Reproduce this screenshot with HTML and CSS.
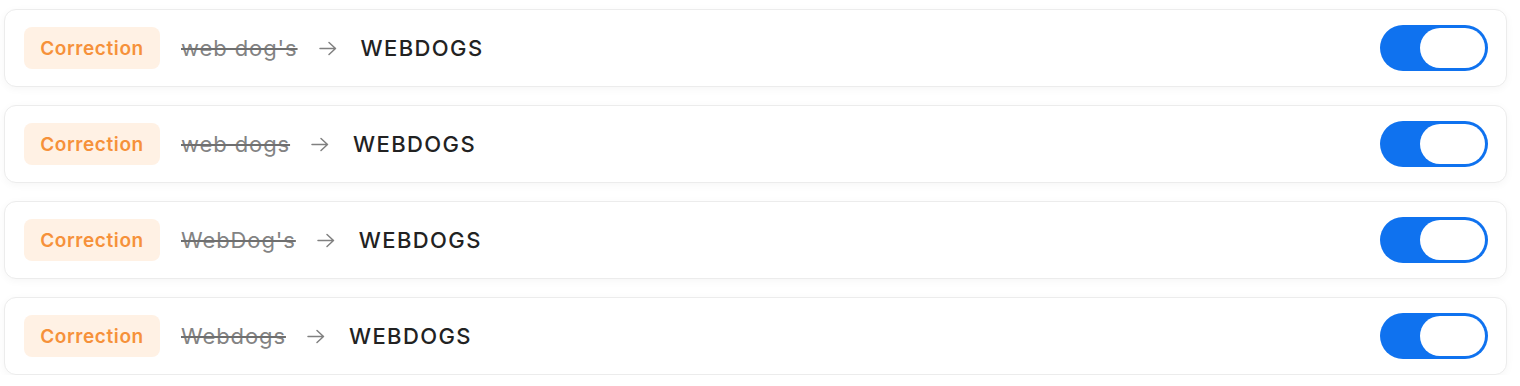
FILE: index.html
```html
<!DOCTYPE html>
<html lang="en">
<head>
    <meta charset="utf-8">
    <title>Corrections</title>
    <link rel="stylesheet" href="styles.css">
</head>
<body>
    <div class="rule-list">
        <div class="rule">
            <span class="badge">Correction</span>
            <span class="from">web dog's</span>
            <svg class="arrow" width="18" height="15" viewBox="0 0 18 15"><path d="M1 7.5h15.5M10 1.5l6.5 6-6.5 6"/></svg>
            <span class="to">WEBDOGS</span>
            <label class="toggle"><input type="checkbox" checked><span class="knob"></span></label>
        </div>
        <div class="rule">
            <span class="badge">Correction</span>
            <span class="from">web dogs</span>
            <svg class="arrow" width="18" height="15" viewBox="0 0 18 15"><path d="M1 7.5h15.5M10 1.5l6.5 6-6.5 6"/></svg>
            <span class="to">WEBDOGS</span>
            <label class="toggle"><input type="checkbox" checked><span class="knob"></span></label>
        </div>
        <div class="rule">
            <span class="badge">Correction</span>
            <span class="from">WebDog's</span>
            <svg class="arrow" width="18" height="15" viewBox="0 0 18 15"><path d="M1 7.5h15.5M10 1.5l6.5 6-6.5 6"/></svg>
            <span class="to">WEBDOGS</span>
            <label class="toggle"><input type="checkbox" checked><span class="knob"></span></label>
        </div>
        <div class="rule">
            <span class="badge">Correction</span>
            <span class="from">Webdogs</span>
            <svg class="arrow" width="18" height="15" viewBox="0 0 18 15"><path d="M1 7.5h15.5M10 1.5l6.5 6-6.5 6"/></svg>
            <span class="to">WEBDOGS</span>
            <label class="toggle"><input type="checkbox" checked><span class="knob"></span></label>
        </div>
    </div>
</body>
</html>
```
FILE: styles.css
```css
/* General */
body {
    margin: 0;
    font-family: Inter, "Noto Sans", sans-serif;
    background-color: #fff;
}

/* List of rules */
.rule-list {
    display: flex;
    flex-direction: column;
    gap: 18px;
    padding: 9px 13px 0 4px;
}

.rule {
    display: flex;
    align-items: center;
    height: 78px;
    box-sizing: border-box;
    padding: 0 18px 0 19px;
    border: 1px solid #ececec;
    border-radius: 12px;
    background-color: #fff;
    box-shadow: 0 2px 8px rgba(0, 0, 0, 0.04);
}

/* Badge */
.badge {
    display: inline-flex;
    align-items: center;
    justify-content: center;
    width: 136px;
    height: 42px;
    border-radius: 8px;
    background-color: #fff1e4;
    color: #f6913a;
    font-size: 19px;
    font-weight: 600;
    letter-spacing: 0.6px;
}

.from {
    margin-left: 21px;
    color: #838383;
    font-size: 22px;
    letter-spacing: 0.9px;
    text-decoration: line-through;
    text-decoration-color: #6f6f6f;
    text-decoration-thickness: 2px;
}

.arrow {
    margin-left: 21px;
    fill: none;
    stroke: #808080;
    stroke-width: 1.5;
    stroke-linecap: round;
    stroke-linejoin: round;
}

.to {
    margin-left: 24px;
    color: #222;
    font-size: 22px;
    font-weight: 550;
    letter-spacing: 1.4px;
}

/* Switch */
.toggle {
    position: relative;
    margin-left: auto;
    width: 108px;
    height: 46px;
    border-radius: 23px;
    background-color: #0f72ef;
    cursor: pointer;
}

.toggle input {
    display: none;
}

.knob {
    position: absolute;
    top: 3px;
    right: 3px;
    width: 65px;
    height: 40px;
    border-radius: 20px;
    background-color: #fff;
}
```
